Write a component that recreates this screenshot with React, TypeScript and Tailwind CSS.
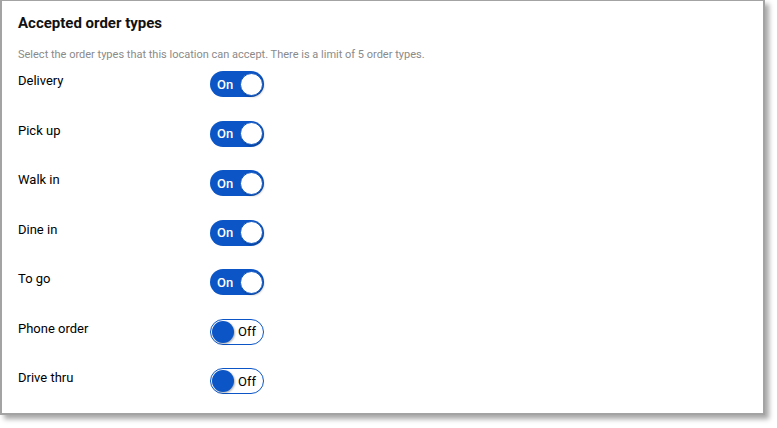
import React from "react"

const orderTypes = [
  { label: "Delivery", on: true },
  { label: "Pick up", on: true },
  { label: "Walk in", on: true },
  { label: "Dine in", on: true },
  { label: "To go", on: true },
  { label: "Phone order", on: false },
  { label: "Drive thru", on: false },
]

function Toggle({ on }: { on: boolean }) {
  if (on) {
    return (
      <div className="flex h-[26px] w-[54px] items-center justify-between rounded-full bg-[#0b55c6] pl-[7px] pr-[1px]">
        <span className="text-[13px] font-medium leading-none text-white">On</span>
        <span className="size-[23px] rounded-full border border-[#0b55c6] bg-white shadow-[1px_1px_2px_rgba(0,0,0,0.25)]" />
      </div>
    )
  }
  return (
    <div className="flex h-[26px] w-[54px] items-center gap-[4px] rounded-full border border-[#0b55c6] bg-white pl-[1px]">
      <span className="size-[22px] rounded-full bg-[#0b55c6] shadow-[1px_1px_2px_rgba(0,0,0,0.3)]" />
      <span className="text-[13px] leading-none text-black">Off</span>
    </div>
  )
}

export default function App() {
  return (
    <div className="h-[428px] w-[777px] bg-white font-['Roboto',sans-serif]">
      <div className="h-[415px] w-[765px] border-2 border-t border-[#a3a3a3] bg-white px-4 pt-[12px] shadow-[4px_4px_5px_rgba(0,0,0,0.35)]">
        <h2 className="text-[15px] font-bold leading-[20px] text-[#111]">Accepted order types</h2>
        <p className="mt-[15px] text-[11px] leading-[13px] text-[#8a8a8a]">
          Select the order types that this location can accept. There is a limit of 5 order types.
        </p>
        <div className="mt-[10px] flex flex-col">
          {orderTypes.map((t) => (
            <div key={t.label} className="flex h-[49.5px] items-start">
              <span className="w-[192px] pt-[2px] text-[13px] leading-[16px] text-black">{t.label}</span>
              <Toggle on={t.on} />
            </div>
          ))}
        </div>
      </div>
    </div>
  )
}
